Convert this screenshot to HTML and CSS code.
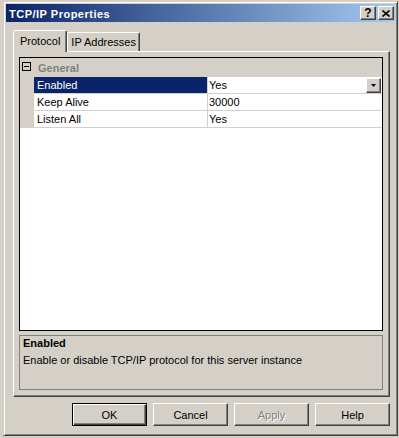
FILE: index.html
```html
<!DOCTYPE html>
<html lang="en">
<head>
  <meta charset="UTF-8" />
  <title>TCP/IP Properties</title>
  <link rel="stylesheet" href="styles.css">
</head>
<body>
  <div class="window">
    <div class="titlebar">
      <span class="title">TCP/IP Properties</span>
      <div class="caption-btns">
        <span class="cap-btn">?</span>
        <span class="cap-btn close-btn">
          <svg width="8" height="7" viewBox="0 0 8 7"><path d="M0.5 0.5L7.5 6.5M7.5 0.5L0.5 6.5" stroke="#000" stroke-width="1.6"/></svg>
        </span>
      </div>
    </div>

    <div class="tabs">
      <div class="tab active">Protocol</div>
      <div class="tab">IP Addresses</div>
    </div>

    <div class="page">
      <div class="propgrid">
        <div class="category">
          <span class="expander"><span class="minus"></span></span>
          <span class="cat-name">General</span>
        </div>
        <div class="prop selected">
          <div class="gutter"></div>
          <div class="name">Enabled</div>
          <div class="value">
            <span>Yes</span>
            <span class="dd-btn"><svg width="5" height="3" viewBox="0 0 5 3"><path d="M0 0H5L2.5 3Z" fill="#000"/></svg></span>
          </div>
        </div>
        <div class="prop">
          <div class="gutter"></div>
          <div class="name">Keep Alive</div>
          <div class="value"><span>30000</span></div>
        </div>
        <div class="prop">
          <div class="gutter"></div>
          <div class="name">Listen All</div>
          <div class="value"><span>Yes</span></div>
        </div>
      </div>

      <div class="helpbox">
        <div class="help-title">Enabled</div>
        <div class="help-desc">Enable or disable TCP/IP protocol for this server instance</div>
      </div>
    </div>

    <div class="buttons">
      <button class="btn default">OK</button>
      <button class="btn">Cancel</button>
      <button class="btn disabled">Apply</button>
      <button class="btn">Help</button>
    </div>
  </div>
</body>
</html>
```

FILE: styles.css
```css
body {
  margin: 0;
  font-family: "Liberation Sans", Arial, sans-serif;
  font-size: 11px;
  color: #000;
  background-color: #d4d0c8;
}
.window {
  width: 395px;
  height: 435px;
  margin: 1px 0 0 3px;
  box-sizing: border-box;
  border: 1px solid;
  border-color: #d4d0c8 #404040 #404040 #d4d0c8;
  box-shadow: inset 1px 1px #fff, inset -1px -1px #808080;
  padding: 2px;
  background-color: #d4d0c8;
}
.titlebar {
  height: 18px;
  display: flex;
  justify-content: space-between;
  align-items: flex-start;
  background: linear-gradient(to right, #0a246a, #a6caf0);
  padding: 0 1px 0 3px;
}
.title {
  color: #fff;
  font-weight: bold;
  letter-spacing: 0.5px;
  line-height: 18px;
  padding-top: 1px;
}
.caption-btns {
  display: flex;
  gap: 2px;
  margin-top: 2px;
}
.cap-btn {
  width: 16px;
  height: 14px;
  box-sizing: border-box;
  border: 1px solid;
  border-color: #fff #404040 #404040 #fff;
  box-shadow: inset -1px -1px #808080;
  background-color: #d4d0c8;
  display: flex;
  align-items: center;
  justify-content: center;
  font-weight: bold;
  font-size: 12px;
  line-height: 12px;
}
.tabs {
  display: flex;
  align-items: flex-end;
  height: 21px;
  margin: 8px 0 0 7px;
}
.tab {
  height: 19px;
  box-sizing: border-box;
  padding: 2px 3px 0;
  border: 1px solid;
  border-bottom: none;
  border-color: #fff #404040 transparent #fff;
  box-shadow: inset -1px 0 #808080;
  border-radius: 2px 2px 0 0;
  line-height: 14px;
  white-space: nowrap;
}
.tab.active {
  height: 22px;
  margin-bottom: -1px;
  padding: 3px 6px 0;
  background-color: #d4d0c8;
  position: relative;
  z-index: 1;
}
.page {
  margin-left: 7px;
  width: 377px;
  height: 346px;
  box-sizing: border-box;
  border: 1px solid;
  border-color: #fff #404040 #404040 #fff;
  box-shadow: inset -1px -1px #808080;
  padding: 5px 6px 6px 5px;
  display: flex;
  flex-direction: column;
  gap: 4px;
}
.propgrid {
  height: 274px;
  box-sizing: border-box;
  border: 1px solid #000;
  background-color: #fff;
}
.category {
  display: flex;
  align-items: flex-start;
  height: 19px;
  padding-left: 2px;
  background-color: #d4d0c8;
}
.expander {
  width: 9px;
  height: 9px;
  box-sizing: border-box;
  border: 1px solid #000;
  margin-top: 4px;
  display: flex;
  align-items: center;
  justify-content: center;
}
.minus {
  width: 5px;
  height: 1px;
  background-color: #000;
}
.cat-name {
  margin: 2px 0 0 7px;
  line-height: 17px;
  font-weight: bold;
  color: #808080;
}
.prop {
  display: flex;
  height: 17px;
  box-sizing: border-box;
  border-bottom: 1px solid #d4d0c8;
  line-height: 16px;
}
.gutter {
  width: 14px;
  background-color: #d4d0c8;
}
.name {
  width: 174px;
  box-sizing: border-box;
  padding-left: 3px;
  border-right: 1px solid #d4d0c8;
}
.prop.selected .name {
  background-color: #0a246a;
  color: #fff;
}
.value {
  flex: 1;
  display: flex;
  justify-content: space-between;
  align-items: flex-start;
  padding-left: 1px;
}
.dd-btn {
  width: 15px;
  height: 15px;
  box-sizing: border-box;
  margin: 1px 1px 0 0;
  border: 1px solid;
  border-color: #fff #404040 #404040 #fff;
  box-shadow: inset -1px -1px #808080;
  background-color: #d4d0c8;
  display: flex;
  align-items: center;
  justify-content: center;
}
.helpbox {
  height: 55px;
  box-sizing: border-box;
  border: 1px solid #808080;
  padding: 1px 3px 0;
}
.help-title {
  font-weight: bold;
  line-height: 13px;
}
.help-desc {
  margin-top: 3px;
  line-height: 14px;
}
.buttons {
  display: flex;
  justify-content: flex-end;
  gap: 6px;
  margin-top: 6px;
  padding-right: 5px;
}
.btn {
  width: 75px;
  height: 23px;
  box-sizing: border-box;
  border: 1px solid;
  border-color: #fff #404040 #404040 #fff;
  box-shadow: inset -1px -1px #808080;
  background-color: #d4d0c8;
  font-family: "Liberation Sans", Arial, sans-serif;
  font-size: 11px;
  color: #000;
  padding: 0;
}
.btn.default {
  border-color: #000;
  box-shadow: inset 1px 1px #fff, inset -1px -1px #404040, inset -2px -2px #808080;
}
.btn.disabled {
  color: #808080;
  text-shadow: 1px 1px #fff;
}
```
